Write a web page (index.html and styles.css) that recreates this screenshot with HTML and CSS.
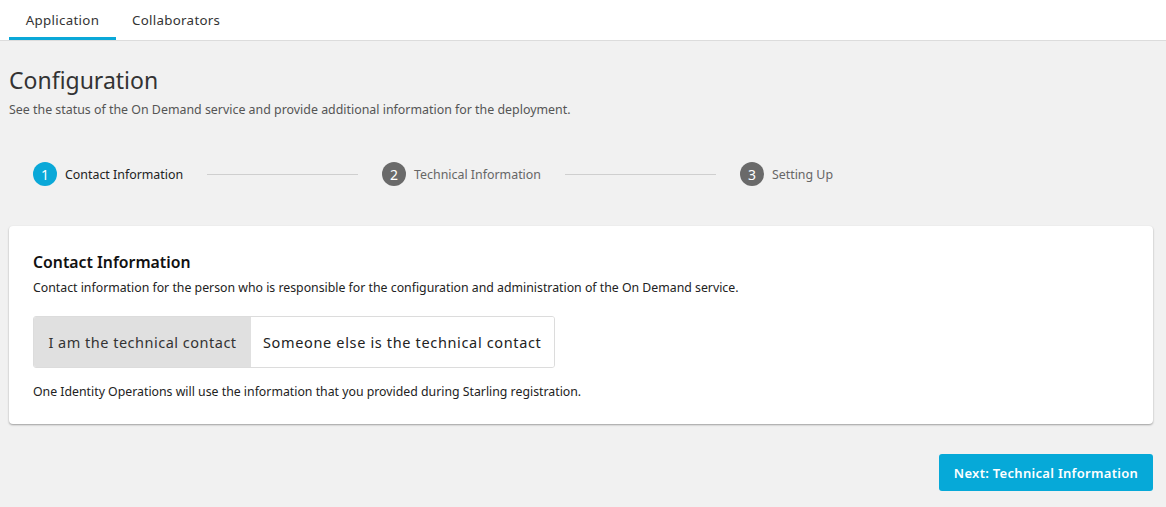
FILE: index.html
```html
<!DOCTYPE html>
<html>
<head>
<meta charset="utf-8">
<link rel="stylesheet" href="styles.css">
</head>
<body>
<nav class="tabs">
  <a class="tab active">Application</a>
  <a class="tab">Collaborators</a>
</nav>
<main class="content">
  <h1 class="title">Configuration</h1>
  <p class="subtitle">See the status of the On Demand service and provide additional information for the deployment.</p>
  <div class="stepper">
    <div class="step current"><span class="num">1</span><span class="label">Contact Information</span></div>
    <div class="line"></div>
    <div class="step"><span class="num">2</span><span class="label">Technical Information</span></div>
    <div class="line"></div>
    <div class="step"><span class="num">3</span><span class="label">Setting Up</span></div>
  </div>
  <section class="card">
    <h2 class="card-title">Contact Information</h2>
    <p class="card-desc">Contact information for the person who is responsible for the configuration and administration of the On Demand service.</p>
    <div class="segmented">
      <button class="seg selected">I am the technical contact</button>
      <button class="seg">Someone else is the technical contact</button>
    </div>
    <p class="note">One Identity Operations will use the information that you provided during Starling registration.</p>
  </section>
  <div class="actions">
    <button class="primary">Next: Technical Information</button>
  </div>
</main>
</body>
</html>
```
FILE: styles.css
```css
* { box-sizing: border-box; }
html, body { margin: 0; padding: 0; }
body {
  background: #f1f1f1;
  font-family: "Noto Sans", "Open Sans", sans-serif;
  color: #222;
  width: 1166px;
  height: 507px;
  overflow: hidden;
}
.tabs {
  display: flex;
  background: #fff;
  height: 41px;
  border-bottom: 1px solid #dcdcdc;
  padding-left: 9px;
}
.tab {
  display: flex;
  align-items: center;
  height: 40px;
  padding: 3px 16px 0 16px;
  font-size: 13.3px;
  color: #333;
  letter-spacing: 0.3px;
  border-bottom: 3px solid transparent;
}
.tab.active {
  border-bottom-color: #0aa8d8;
  width: 107px;
  justify-content: center;
}
.content {
  padding: 0 13px 0 9px;
}
.title {
  margin: 24px 0 0 0;
  font-size: 23px;
  font-weight: 400;
  line-height: 30px;
  color: #333;
}
.subtitle {
  margin: 6px 0 0 0;
  font-size: 12.4px;
  line-height: 18px;
  color: #555;
}
.stepper {
  display: flex;
  align-items: center;
  margin: 40px 0 0 24px;
  height: 30px;
  width: 800px;
}
.step {
  display: flex;
  align-items: center;
  gap: 8px;
}
.num {
  width: 24px;
  height: 24px;
  border-radius: 50%;
  background: #6a6a6a;
  color: #fff;
  display: flex;
  align-items: center;
  justify-content: center;
  font-size: 14px;
}
.step.current .num { background: #0aa8d8; }
.label {
  font-size: 12.4px;
  color: #666;
}
.step.current .label { color: #222; }
.line {
  flex: 1;
  height: 1px;
  background: #cfcfcf;
  margin: 0 24px;
}
.card {
  margin-top: 37px;
  background: #fff;
  border-radius: 4px;
  box-shadow: 0 1px 2px rgba(0,0,0,0.35);
  padding: 24px 24px 24px 24px;
  height: 198px;
}
.card-title {
  margin: 0;
  font-size: 15.8px;
  font-weight: 600;
  line-height: 24px;
  color: #111;
}
.card-desc {
  margin: 4px 0 0 0;
  font-size: 12.3px;
  line-height: 20px;
  color: #222;
}
.segmented {
  display: inline-flex;
  margin-top: 18px;
  border: 1px solid #dcdcdc;
  border-radius: 3px;
  overflow: hidden;
  height: 52px;
}
.seg {
  font-family: inherit;
  font-size: 14.5px;
  letter-spacing: 0.65px;
  border: none;
  background: #fff;
  color: #222;
  padding: 0 12px;
}
.seg.selected {
  background: #e0e0e0;
  color: #333;
  width: 217px;
  letter-spacing: 0.5px;
}
.note {
  margin: 14px 0 0 0;
  font-size: 12.3px;
  line-height: 20px;
  color: #222;
}
.actions {
  display: flex;
  justify-content: flex-end;
  margin-top: 30px;
}
.primary {
  font-family: inherit;
  background: #06a9d8;
  color: #fff;
  border: none;
  border-radius: 3px;
  height: 37px;
  width: 214px;
  font-size: 13px;
  font-weight: 600;
  letter-spacing: 0.3px;
}
```
